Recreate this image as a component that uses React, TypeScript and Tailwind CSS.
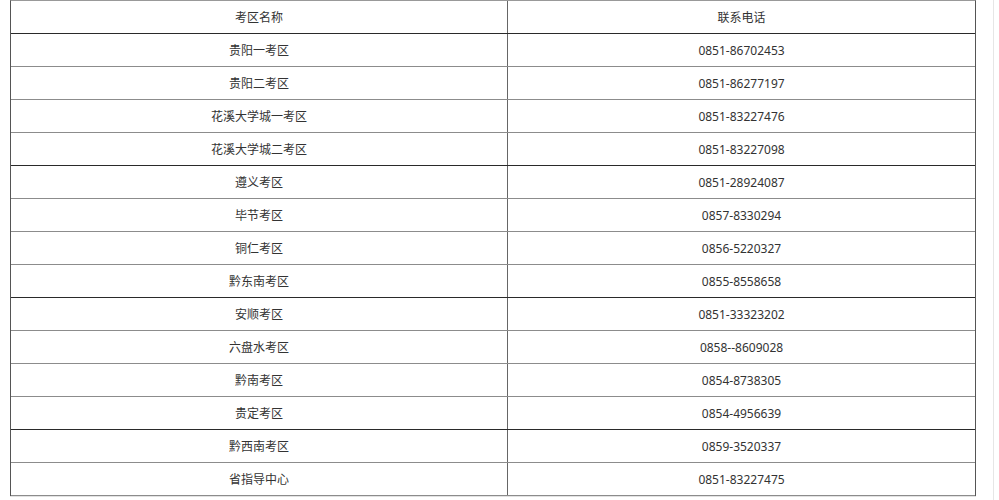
const rows: [string, string][] = [
  ["贵阳一考区", "0851-86702453"],
  ["贵阳二考区", "0851-86277197"],
  ["花溪大学城一考区", "0851-83227476"],
  ["花溪大学城二考区", "0851-83227098"],
  ["遵义考区", "0851-28924087"],
  ["毕节考区", "0857-8330294"],
  ["铜仁考区", "0856-5220327"],
  ["黔东南考区", "0855-8558658"],
  ["安顺考区", "0851-33323202"],
  ["六盘水考区", "0858--8609028"],
  ["黔南考区", "0854-8738305"],
  ["贵定考区", "0854-4956639"],
  ["黔西南考区", "0859-3520337"],
  ["省指导中心", "0851-83227475"],
];

export default function App() {
  const all: [string, string][] = [["考区名称", "联系电话"], ...rows];

  return (
    <div
      className="flex h-[500px] w-[999px] bg-white text-[12px] text-[#333]"
      style={{ fontFamily: '"Noto Sans", "Noto Sans CJK SC", sans-serif' }}
    >
      <div className="ml-[10px] w-[966px]">
        <div className="border-x border-t border-x-[#555] border-t-[#999]">
          {all.map(([name, phone], i) => (
            <div
              key={name}
              className={
                "flex h-[33px] border-b " +
                (i % 4 === 0 && i !== all.length - 1
                  ? "border-[#2a2a2a]"
                  : "border-[#8c8c8c]")
              }
            >
              <div className="flex w-[497px] items-center justify-center border-r border-[#666] pt-[2px]">
                {name}
              </div>
              <div className="flex flex-1 items-center justify-center pt-[2px]">{phone}</div>
            </div>
          ))}
        </div>
        <div className="h-px w-full bg-[#e2e2e2]" />
      </div>
      <div className="ml-[17px] h-full w-px bg-[#e6e6e6]" />
    </div>
  );
}
